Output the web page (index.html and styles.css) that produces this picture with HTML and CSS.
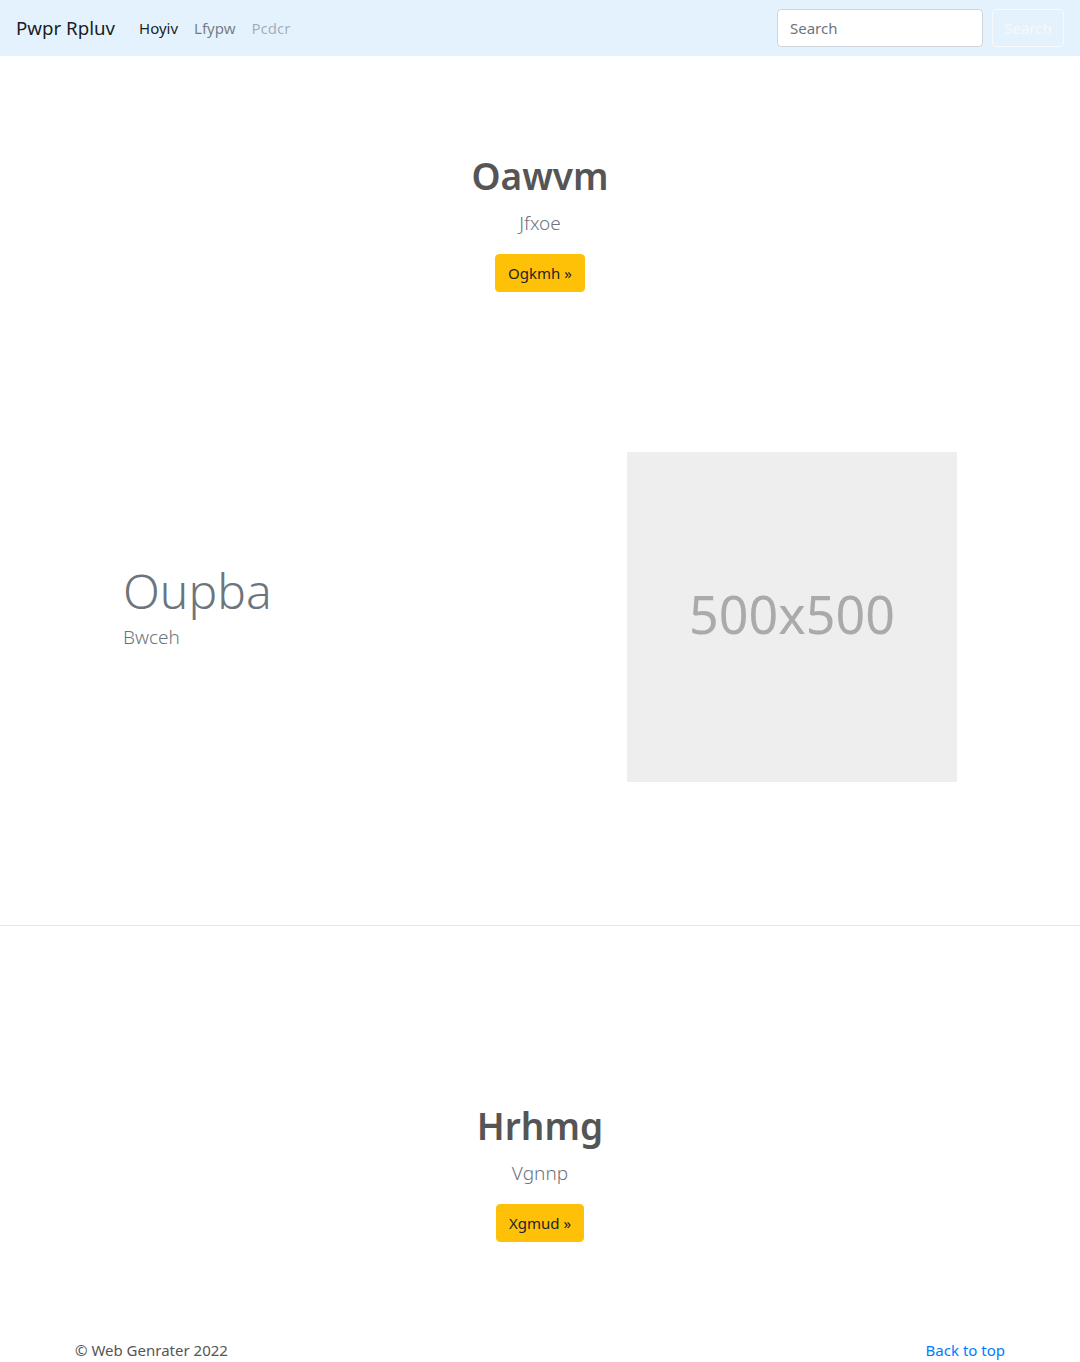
FILE: index.html
```html
<!DOCTYPE html>
<html lang="en">
<head>
<meta charset="utf-8">
<title>Pwpr Rpluv</title>
<link rel="stylesheet" href="styles.css">
</head>
<body>
<nav class="navbar">
  <a class="brand" href="#">Pwpr Rpluv</a>
  <ul class="nav">
    <li><a class="nav-link active" href="#">Hoyiv</a></li>
    <li><a class="nav-link" href="#">Lfypw</a></li>
    <li><a class="nav-link disabled" href="#">Pcdcr</a></li>
  </ul>
  <form class="search">
    <input class="search-input" type="search" placeholder="Search">
    <button class="search-btn" type="button">Search</button>
  </form>
</nav>

<main>
  <section class="hero hero-top">
    <h1 class="hero-title">Oawvm</h1>
    <p class="lead">Jfxoe</p>
    <a class="btn-warning" href="#">Ogkmh &raquo;</a>
  </section>

  <section class="feature">
    <div class="feature-inner">
      <div class="feature-text">
        <h2 class="feature-title">Oupba</h2>
        <p class="lead">Bwceh</p>
      </div>
      <div class="feature-media">
        <div class="placeholder">500x500</div>
      </div>
    </div>
  </section>

  <section class="hero hero-bottom">
    <h1 class="hero-title">Hrhmg</h1>
    <p class="lead">Vgnnp</p>
    <a class="btn-warning" href="#">Xgmud &raquo;</a>
  </section>
</main>

<footer class="footer">
  <p class="copy">&copy; Web Genrater 2022</p>
  <a class="top-link" href="#">Back to top</a>
</footer>
</body>
</html>
```

FILE: styles.css
```css
* { box-sizing: border-box; }

body {
  margin: 0;
  font-family: "Segoe UI", "Noto Sans", "Open Sans", sans-serif;
  font-size: 15px;
  line-height: 24px;
  color: #212529;
  background: #fff;
}

a { text-decoration: none; }

.navbar {
  display: flex;
  align-items: center;
  height: 56px;
  padding: 0 16px;
  background: #e3f2fd;
}

.brand {
  font-size: 18.7px;
  line-height: 30px;
  color: rgba(0,0,0,.9);
  margin-right: 16px;
}

.nav {
  display: flex;
  list-style: none;
  margin: 0;
  padding: 0;
  flex: 1;
}

.nav-link {
  display: block;
  padding: 8px 8px;
  font-size: 15px;
  color: rgba(0,0,0,.5);
}
.nav-link.active { color: rgba(0,0,0,.9); }
.nav-link.disabled { color: rgba(0,0,0,.3); }

.search {
  display: flex;
  align-items: center;
}

.search-input {
  width: 206px;
  height: 38px;
  padding: 6px 12px;
  font: inherit;
  font-size: 15px;
  color: #495057;
  background: #fff;
  border: 1px solid #ced4da;
  border-radius: 4px;
  margin-right: 9px;
}
.search-input::placeholder { color: #6c757d; }

.search-btn {
  width: 72px;
  height: 38px;
  padding: 6px 10px;
  font: inherit;
  font-size: 15px;
  color: #f8f9fa;
  background: transparent;
  border: 1px solid #f8f9fa;
  border-radius: 4px;
}

.hero {
  text-align: center;
}
.hero-top { padding: 96px 0 160px; }
.hero-bottom { padding: 176px 0 48px; }

.hero-title {
  margin: 0 0 8px;
  font-size: 37px;
  font-weight: 600;
  line-height: 48px;
  color: #555;
}

.lead {
  margin: 0 0 16px;
  font-size: 19px;
  font-weight: 300;
  line-height: 30px;
  color: #6c757d;
}

.btn-warning {
  display: inline-block;
  padding: 6px 12px;
  font-size: 15px;
  line-height: 24px;
  color: #212529;
  background: #ffc107;
  border: 1px solid #ffc107;
  border-radius: 4px;
}

.feature {
  border-bottom: 1px solid #e5e5e5;
  padding-bottom: 143px;
}

.feature-inner {
  width: 834px;
  max-width: 100%;
  margin: 0 auto;
  display: grid;
  grid-template-columns: 474px 330px;
  column-gap: 30px;
  align-items: center;
}

.feature-title {
  margin: 0;
  font-size: 48px;
  font-weight: 300;
  line-height: 62px;
  color: #6c757d;
}

.feature-text .lead { margin-bottom: 22px; }

.placeholder {
  width: 330px;
  height: 330px;
  display: flex;
  align-items: center;
  justify-content: center;
  padding-bottom: 6px;
  background: #eee;
  color: #aaa;
  font-size: 52px;
}

.footer {
  width: 960px;
  margin: 0 auto;
  padding: 48px 15px 0;
  display: flex;
  justify-content: space-between;
}

.copy {
  margin: 0 0 16px;
  color: #555;
}

.top-link {
  color: #007bff;
}
```
